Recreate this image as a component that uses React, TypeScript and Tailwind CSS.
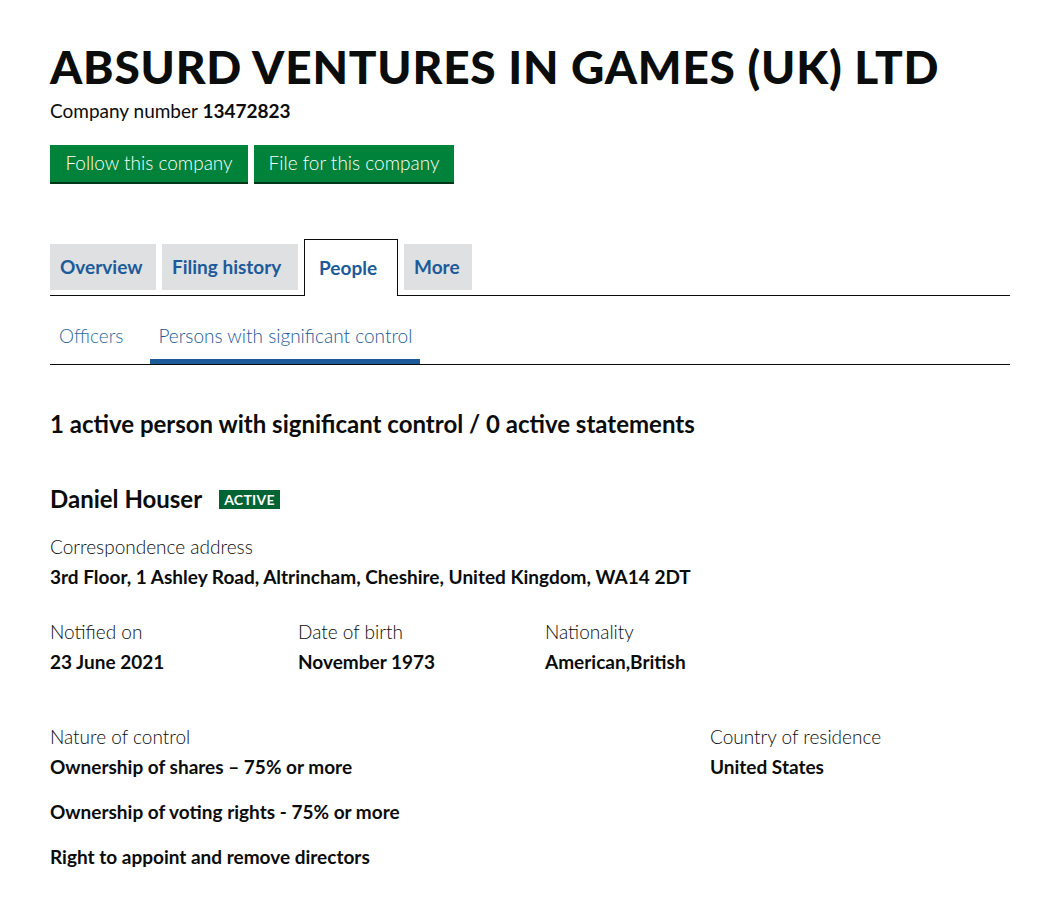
import React from "react";

export default function App() {
  const tabGray =
    "h-[46px] mb-[5px] pl-[10px] bg-[#dee0e2] text-[#1d5a99] font-bold text-[19px] flex items-center";
  return (
    <div className="w-[1060px] min-h-[918px] bg-white text-[#0b0c0c] font-['Lato','Noto_Sans',sans-serif] px-[50px] pt-[40px]">
      <h1 className="text-[46px] leading-[54px] font-black tracking-[0.8px]">ABSURD VENTURES IN GAMES (UK) LTD</h1>
      <p className="mt-[5px] text-[19px] leading-[24px]">
        Company number <span className="font-bold">13472823</span>
      </p>
      <div className="mt-[22px] flex gap-[6px]">
        <button className="w-[198px] h-[37px] bg-[#00823b] text-white text-[19px] font-light shadow-[0_2px_0_#003618]">Follow this company</button>
        <button className="w-[200px] h-[37px] bg-[#00823b] text-white text-[19px] font-light shadow-[0_2px_0_#003618]">File for this company</button>
      </div>

      <div className="mt-[57px] flex items-end gap-[6px] border-b border-[#0b0c0c] w-[960px]">
        <div className={`${tabGray} w-[106px]`}>Overview</div>
        <div className={`${tabGray} w-[136px]`}>Filing history</div>
        <div className="w-[94px] h-[57px] -mb-px pl-[14px] bg-white border border-b-0 border-[#0b0c0c] text-[#1d5a99] font-bold text-[19px] flex items-center">People</div>
        <div className={`${tabGray} w-[68px]`}>More</div>
      </div>

      <div className="mt-[28px] flex items-end border-b border-[#0b0c0c] w-[960px] text-[19px] leading-[24px] text-[#1d5a99] font-light">
        <div className="px-[9px] pb-[16px] text-[#2b6aa3]">Officers</div>
        <div className="ml-[18px] px-[8px] pb-[11px] border-b-[5px] border-[#1d5a99]">Persons with significant control</div>
      </div>

      <h2 className="mt-[44px] text-[24px] leading-[30px] font-bold">1 active person with significant control / 0 active statements</h2>

      <div className="mt-[45px] flex items-center gap-[17px]">
        <h3 className="text-[24px] leading-[30px] font-bold">Daniel Houser</h3>
        <span className="bg-[#006435] text-white text-[14px] leading-[19px] font-bold px-[5px] uppercase tracking-[0.3px]">Active</span>
      </div>

      <dl className="mt-[21px] text-[19px]">
        <dt className="font-light leading-[24px]">Correspondence address</dt>
        <dd className="mt-[6px] font-bold leading-[24px]">3rd Floor, 1 Ashley Road, Altrincham, Cheshire, United Kingdom, WA14 2DT</dd>
      </dl>

      <div className="mt-[31px] grid grid-cols-[248px_247px_1fr] text-[19px]">
        <dl>
          <dt className="font-light leading-[24px]">Notified on</dt>
          <dd className="mt-[6px] font-bold leading-[24px]">23 June 2021</dd>
        </dl>
        <dl>
          <dt className="font-light leading-[24px]">Date of birth</dt>
          <dd className="mt-[6px] font-bold leading-[24px]">November 1973</dd>
        </dl>
        <dl>
          <dt className="font-light leading-[24px]">Nationality</dt>
          <dd className="mt-[6px] font-bold leading-[24px]">American,British</dd>
        </dl>
      </div>

      <div className="mt-[51px] grid grid-cols-[660px_1fr] text-[19px]">
        <dl>
          <dt className="font-light leading-[24px]">Nature of control</dt>
          <dd className="mt-[6px] font-bold leading-[24px]">Ownership of shares – 75% or more</dd>
          <dd className="mt-[21px] font-bold leading-[24px]">Ownership of voting rights - 75% or more</dd>
          <dd className="mt-[21px] font-bold leading-[24px]">Right to appoint and remove directors</dd>
        </dl>
        <dl>
          <dt className="font-light leading-[24px]">Country of residence</dt>
          <dd className="mt-[6px] font-bold leading-[24px]">United States</dd>
        </dl>
      </div>
    </div>
  );
}
